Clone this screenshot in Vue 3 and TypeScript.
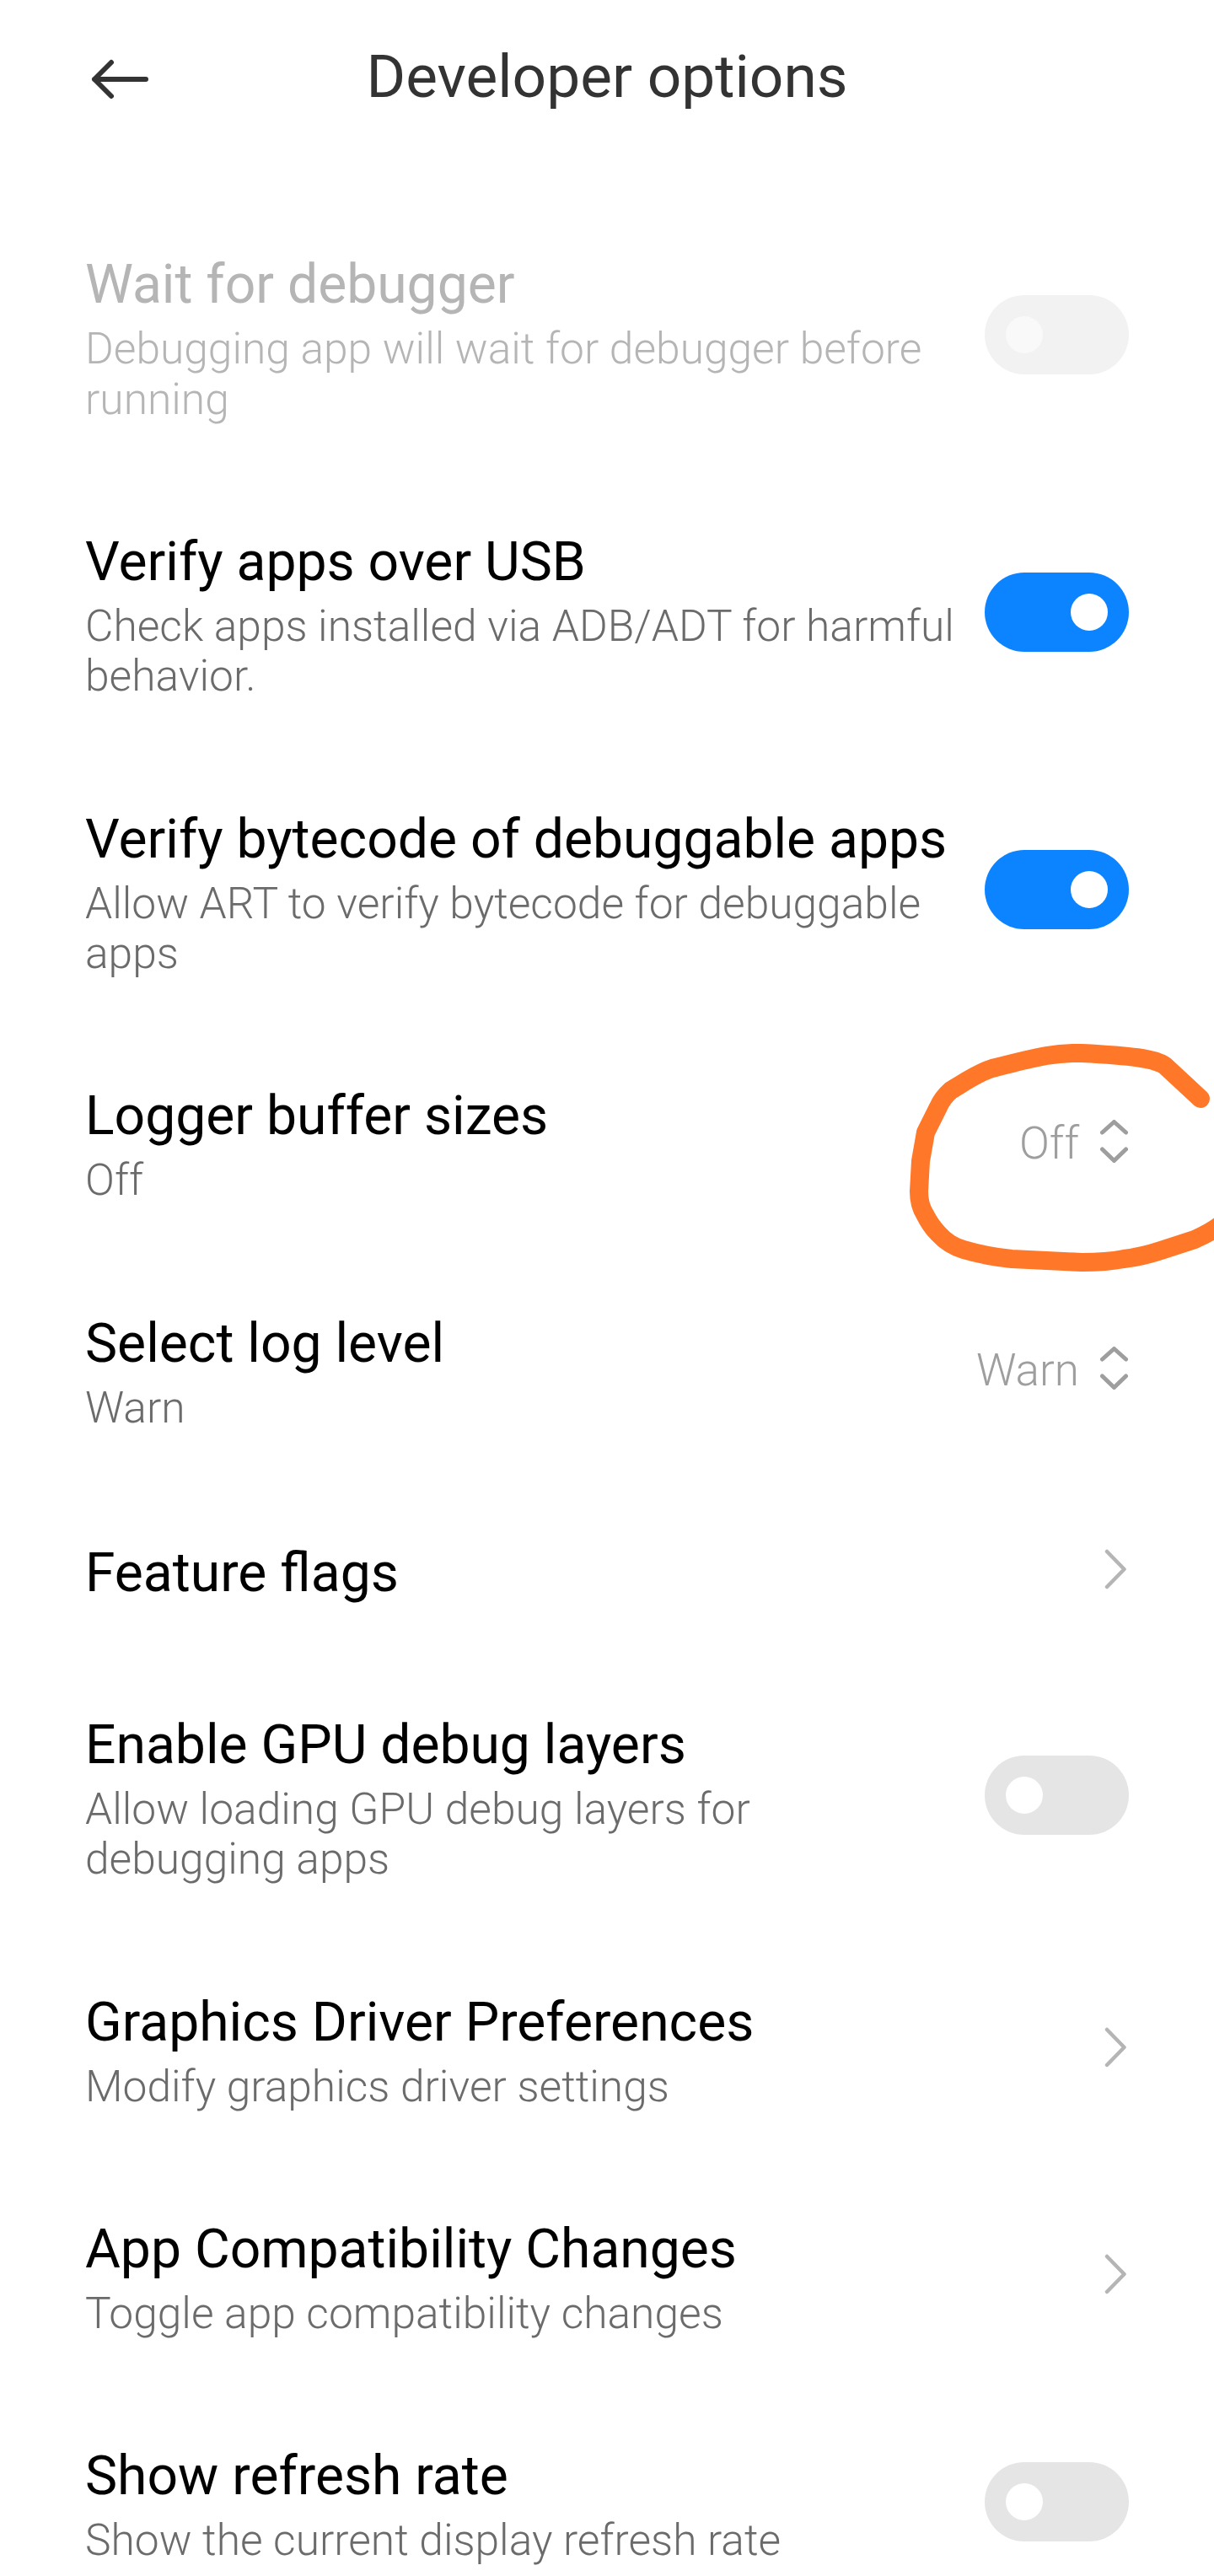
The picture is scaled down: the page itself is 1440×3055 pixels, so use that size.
<script setup lang="ts">
type Row = {
  title: string
  sub?: string
  control: 'on' | 'off' | 'select' | 'arrow'
  value?: string
  disabled?: boolean
}

const rows: Row[] = [
  { title: 'Wait for debugger', sub: 'Debugging app will wait for debugger before running', control: 'off', disabled: true },
  { title: 'Verify apps over USB', sub: 'Check apps installed via ADB/ADT for harmful behavior.', control: 'on' },
  { title: 'Verify bytecode of debuggable apps', sub: 'Allow ART to verify bytecode for debuggable apps', control: 'on' },
  { title: 'Logger buffer sizes', sub: 'Off', control: 'select', value: 'Off' },
  { title: 'Select log level', sub: 'Warn', control: 'select', value: 'Warn' },
  { title: 'Feature flags', control: 'arrow' },
  { title: 'Enable GPU debug layers', sub: 'Allow loading GPU debug layers for debugging apps', control: 'off' },
  { title: 'Graphics Driver Preferences', sub: 'Modify graphics driver settings', control: 'arrow' },
  { title: 'App Compatibility Changes', sub: 'Toggle app compatibility changes', control: 'arrow' },
  { title: 'Show refresh rate', sub: 'Show the current display refresh rate', control: 'off' },
]

// hand-drawn circle around the "Off" value
const scribble =
  'M1424 1303 L1382 1264 C1370 1255 1340 1252 1283 1249 C1255 1248 1235 1252 1177 1267 C1160 1272 1145 1283 1128 1293 C1120 1300 1116 1306 1113 1313 L1098 1343 L1092 1377 L1090 1413 C1090 1425 1092 1432 1097 1440 C1102 1450 1106 1456 1113 1463 C1122 1473 1130 1478 1143 1482 C1160 1487 1180 1491 1200 1493 L1283 1497 C1300 1497 1318 1496 1333 1493 C1350 1491 1362 1488 1377 1483 L1417 1470 C1428 1465 1438 1460 1447 1453'
</script>

<template>
  <div class="page">
    <header class="top">
      <svg class="back" width="70" height="48" viewBox="0 0 70 48">
        <path d="M65 24 H4 M24 4 L4 24 L24 44" fill="none" stroke="#333" stroke-width="6" stroke-linecap="round" stroke-linejoin="round" />
      </svg>
      <h1 class="heading">Developer options</h1>
    </header>

    <div class="list">
      <div v-for="row in rows" :key="row.title" class="row" :class="{ disabled: row.disabled, single: !row.sub }">
        <div class="text">
          <div class="title">{{ row.title }}</div>
          <div v-if="row.sub" class="sub">{{ row.sub }}</div>
        </div>

        <div v-if="row.control === 'on' || row.control === 'off'" class="switch" :class="row.control">
          <span class="knob"></span>
        </div>

        <div v-else-if="row.control === 'select'" class="select">
          <span class="value">{{ row.value }}</span>
          <svg width="33" height="51" viewBox="0 0 33 51">
            <path d="M2.5 15 L16.5 2.5 L30.5 15 M2.5 35 L16.5 48.5 L30.5 35" fill="none" stroke="#9e9e9e" stroke-width="5" stroke-linecap="round" stroke-linejoin="round" />
          </svg>
        </div>

        <svg v-else class="arrow" width="26" height="48" viewBox="0 0 26 48">
          <path d="M3 3 L23.5 24 L3 45" fill="none" stroke="#b5b5b5" stroke-width="4.5" stroke-linecap="round" stroke-linejoin="round" />
        </svg>
      </div>
    </div>

    <svg class="scribble" width="1440" height="3055" viewBox="0 0 1440 3055">
      <path :d="scribble" fill="none" stroke="#ff7729" stroke-width="22" stroke-linecap="round" stroke-linejoin="round" />
    </svg>
  </div>
</template>

<style scoped>
.page {
  position: relative;
  width: 1440px;
  height: 3055px;
  overflow: hidden;
  background: #fff;
  font-family: Roboto, "Liberation Sans", sans-serif;
}

.top {
  position: relative;
  display: flex;
  align-items: center;
  justify-content: center;
  height: 181px;
}

.back {
  position: absolute;
  left: 108px;
  top: 70px;
}

.heading {
  margin: 0;
  font-size: 71.2px;
  font-weight: 400;
  color: #333;
}

.list {
  padding-top: 51.5px;
}

.row {
  display: flex;
  align-items: center;
  justify-content: space-between;
  padding: 64.5px 101px 58.3px;
}

.row.single {
  padding-top: 67.5px;
  padding-bottom: 59.5px;
}

.text {
  flex: 1;
  min-width: 0;
  padding-right: 32px;
}

.title {
  font-size: 64.2px;
  line-height: 80px;
  color: #000;
}

.sub {
  margin-top: 7px;
  font-size: 51.5px;
  line-height: 59.5px;
  font-weight: 300;
  color: #6b6b6b;
}

.disabled .title,
.disabled .sub {
  color: #b5b5b5;
}

.switch {
  flex: none;
  display: flex;
  align-items: center;
  width: 171px;
  height: 94px;
  padding: 0 25px;
  box-sizing: border-box;
  border-radius: 47px;
  background: #e5e5e5;
  position: relative;
  top: -3px;
}

.switch.on {
  justify-content: flex-end;
  background: #0d84ff;
}

.knob {
  width: 44px;
  height: 44px;
  border-radius: 50%;
  background: #fff;
}

.disabled .switch {
  background: #f2f2f2;
}

.disabled .knob {
  background: #f9f9f9;
}

.select {
  flex: none;
  display: flex;
  align-items: center;
  gap: 25px;
  position: relative;
  top: -3px;
  margin-right: 1px;
}

.value {
  font-size: 53px;
  font-weight: 300;
  color: #9e9e9e;
  position: relative;
  top: 2px;
}

.arrow {
  flex: none;
  margin-right: 3px;
  position: relative;
  top: -3px;
}

.row.single .arrow {
  top: -4px;
}

.scribble {
  position: absolute;
  left: 0;
  top: 0;
  pointer-events: none;
}
</style>
